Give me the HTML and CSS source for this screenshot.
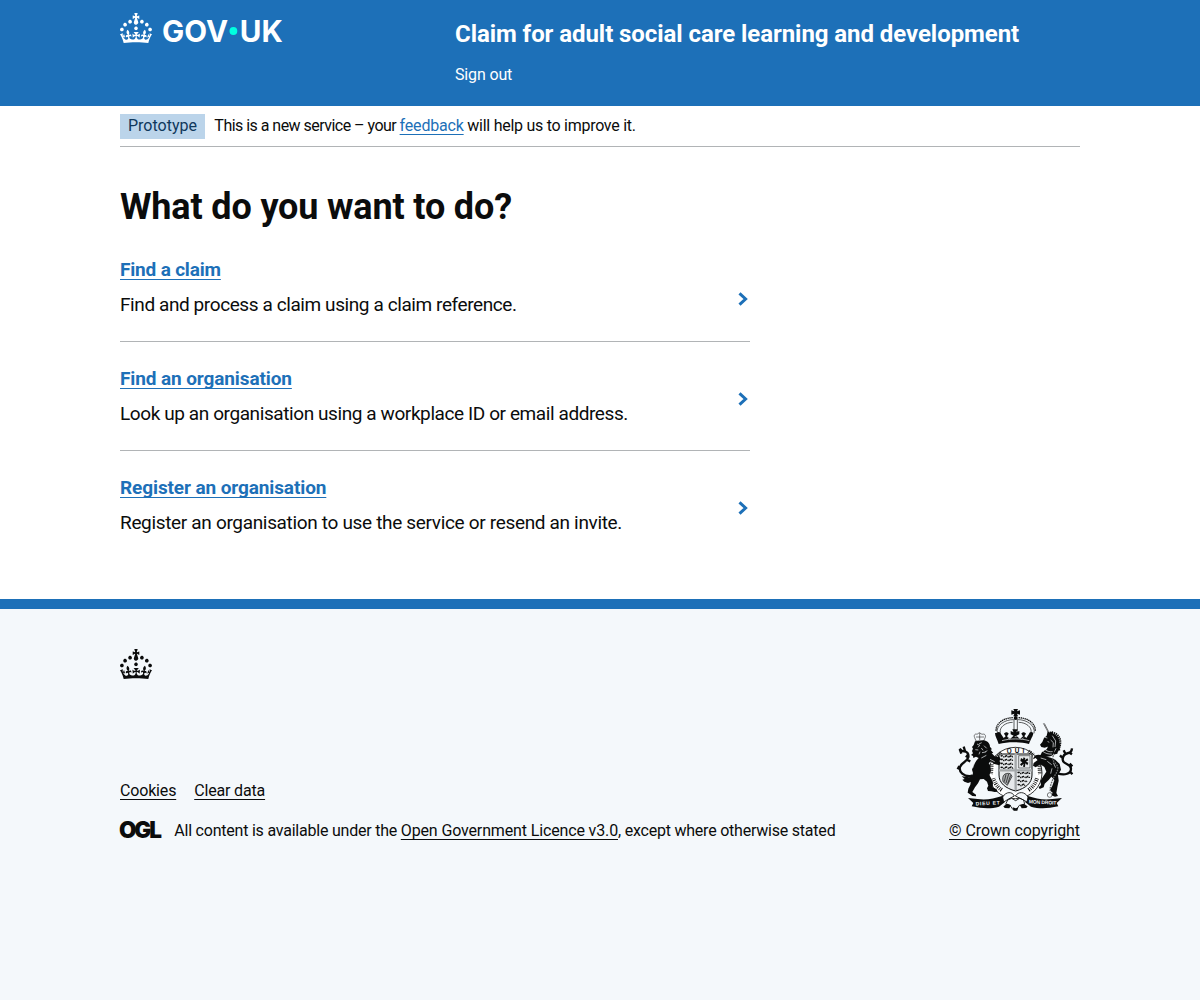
FILE: index.html
```html
<!DOCTYPE html>
<html lang="en">
<head>
<meta charset="utf-8">
<title>What do you want to do?</title>
<link rel="stylesheet" href="styles.css">
</head>
<body>
<header class="header">
  <div class="container header-row">
    <a class="logo" href="#">
      <svg viewBox="0 0 170 38" width="170" height="38"><path id="crown" fill="currentColor" d="M22.6 10.4c-1 .4-2-.1-2.4-1-.4-.9.1-2 1-2.4.9-.4 2 .1 2.4 1s-.1 2-1 2.4m-5.9 6.7c-.9.4-2-.1-2.4-1-.4-.9.1-2 1-2.4.9-.4 2 .1 2.4 1s-.1 2-1 2.4m10.8-3.7c-1 .4-2-.1-2.4-1-.4-.9.1-2 1-2.4.9-.4 2 .1 2.4 1s0 2-1 2.4m3.3 4.8c-1 .4-2-.1-2.4-1-.4-.9.1-2 1-2.4.9-.4 2 .1 2.4 1s-.1 2-1 2.4M17 4.7l2.3 1.2V2.5l-2.3.7-.2-.2.9-3h-3.4l.9 3-.2.2c-.1.1-2.3-.7-2.3-.7v3.4L15 4.7c.1.1.1.2.2.2l-1.3 4c-.1.2-.1.4-.1.6 0 1.1.8 2 1.9 2.2h.7c1-.2 1.9-1.1 1.9-2.1 0-.2 0-.4-.1-.6l-1.3-4c-.1-.2 0-.2.1-.3m-7.6 5.7c.9.4 2-.1 2.4-1 .4-.9-.1-2-1-2.4-.9-.4-2 .1-2.4 1s0 2 1 2.4m-5 3c.9.4 2-.1 2.4-1 .4-.9-.1-2-1-2.4-.9-.4-2 .1-2.4 1s.1 2 1 2.4m-3.2 4.8c.9.4 2-.1 2.4-1 .4-.9-.1-2-1-2.4-.9-.4-2 .1-2.4 1s0 2 1 2.4m14.8 11c4.4 0 8.6.3 12.3.8 1.1-4.5 2.4-7 3.7-8.8l-2.5-.9c.2 1.3.3 1.9 0 2.7-.4-.4-.8-1.1-1.1-2.3l-1.2 4c.7-.5 1.3-.8 2-.9-1.1 2.5-2.6 3.1-3.5 3-1.1-.2-1.7-1.2-1.5-2.1.3-1.2 1.5-1.5 2.1-.1 1.1-2.3-.8-3-2-2.3 1.9-1.9 2.1-3.5.6-5.6-2.1 1.6-2.1 3.2-1.2 5.5-1.2-1.4-3.2-.6-2.5 1.6.9-1.4 2.1-.5 1.9.8-.2 1.1-1.7 2.1-3.5 1.9-2.7-.2-2.9-2.1-2.9-3.6.7-.1 1.9.5 2.9 1.9l.4-4.3c-1.1 1.1-2.1 1.4-3.2 1.4.4-1.2 2.1-3 2.1-3h-5.4s1.7 1.9 2.1 3c-1.1 0-2.1-.2-3.2-1.4l.4 4.3c1-1.4 2.2-2 2.9-1.9-.1 1.5-.2 3.4-2.9 3.6-1.9.2-3.4-.8-3.5-1.9-.2-1.3 1-2.2 1.9-.8.7-2.3-1.2-3-2.5-1.6.9-2.2.9-3.9-1.2-5.5-1.5 2-1.3 3.7.6 5.6-1.2-.7-3.1 0-2 2.3.6-1.4 1.8-1.1 2.1.1.2.9-.3 1.9-1.5 2.1-.9.2-2.4-.5-3.5-3 .6 0 1.2.3 2 .9l-1.2-4c-.3 1.1-.7 1.9-1.1 2.3-.3-.8-.2-1.4 0-2.7l-2.9.9C1.3 23 2.6 25.5 3.7 30c3.7-.5 7.9-.8 12.3-.8"/>
        <text class="wordmark" x="42" y="28.8" textLength="66" lengthAdjust="spacingAndGlyphs">GOV</text>
        <circle cx="113.4" cy="18" r="3.9" fill="#00ffe0"/>
        <text class="wordmark" x="119.8" y="28.8" textLength="43" lengthAdjust="spacingAndGlyphs">UK</text>
      </svg>
    </a>
    <div class="header-content">
      <a class="service" href="#">Claim for adult social care learning and development</a>
      <nav class="nav"><a href="#">Sign out</a></nav>
    </div>
  </div>
</header>
<div class="page">
  <div class="container">
    <div class="phase">
      <strong class="tag">Prototype</strong>
      <span class="phase-text">This is a new service – your <a class="link" href="#">feedback</a><span class="phase-end"> will help us to improve it.</span></span>
    </div>
    <main class="main">
      <h1>What do you want to do?</h1>
      <ul class="cards">
        <li class="card">
          <div><h2><a class="link" href="#">Find a claim</a></h2><p>Find and process a claim using a claim reference.</p></div>
          <svg class="chevron" viewBox="0 0 10 14" width="10" height="14"><path d="M1.5 1.3 7.6 7l-6.1 5.7"/></svg>
        </li>
        <li class="card">
          <div><h2><a class="link" href="#">Find an organisation</a></h2><p>Look up an organisation using a workplace ID or email address.</p></div>
          <svg class="chevron" viewBox="0 0 10 14" width="10" height="14"><path d="M1.5 1.3 7.6 7l-6.1 5.7"/></svg>
        </li>
        <li class="card">
          <div><h2><a class="link" href="#">Register an organisation</a></h2><p class="looser">Register an organisation to use the service or resend an invite.</p></div>
          <svg class="chevron" viewBox="0 0 10 14" width="10" height="14"><path d="M1.5 1.3 7.6 7l-6.1 5.7"/></svg>
        </li>
      </ul>
    </main>
  </div>
</div>
<footer class="footer">
  <div class="container">
    <svg class="footer-crown" viewBox="0 0 32 30" width="32" height="30"><use href="#crown"/></svg>
    <div class="meta">
      <div class="meta-main">
        <div class="links"><a href="#">Cookies</a><a href="#">Clear data</a></div>
        <div class="licence">
          <svg class="ogl" viewBox="0 0 41 18" width="41" height="18"><text x="-1" y="16.6">OGL</text></svg>
          <span>All content is available under the <a href="#">Open Government Licence v3.0</a>, except where otherwise stated</span>
        </div>
      </div>
      <div class="copyright">
        <svg class="arms" viewBox="45 24 360 312" width="120" height="104">
          <!-- royal crown -->
          <path d="M220 27h14l-3 7 9-3v13l-9-3 3 8h-14l3-8-9 3V31l9 3z"/>
          <circle cx="227" cy="54" r="6"/>
          <path class="line" d="M222 58v38M232 58v38M172 100c-6-24 24-42 49-41M282 100c6-24-24-42-49-41M181 98c-4-16 15-31 37-31M273 98c4-16-15-31-37-31"/>
          <path class="beads" d="M168 92c0-24 25-39 52-39M286 92c0-24-25-39-52-39"/>
          <path d="M170 99c5-5 12-4 13 3l8 12 6-5-5-8c4-6 11-6 14 0l-5 8 9 8 11-10-9-4v-10l9 4-4-9h16l-4 9 9-4v10l-9 4 11 10 9-8-5-8c3-6 10-6 14 0l-5 8 6 5 8-12c1-7 8-8 13-3-1 10-8 18-13 33-28-7-63-7-91 0-4-14-11-23-11-33z"/>
          <path class="cut" d="M186 122c25-7 57-7 82 0M204 113l4 5M246 118l5-5M224 110h6"/>
          <!-- garter and shield -->
          <ellipse class="ring" cx="226" cy="219" rx="70" ry="69"/>
          <ellipse class="outline" cx="226" cy="219" rx="80" ry="77"/>
          <path class="runes" d="M160 235c6 18 14 28 28 37M291 235c-5 17-14 28-28 37M155 192l-2 30M298 192l2 30M170 172l14-13M266 154l14 12"/>
          <text class="motto" x="200" y="159" textLength="53">QUI</text>
          <path class="shield" d="M177 162h99v63c0 24-19 40-49 48-31-8-50-24-50-48z"/>
          <path class="lions" d="M182 169c7-7 7 6 14 0s7 6 14 0 5 4 10 0M182 180c7-7 7 6 14 0s7 6 14 0 5 4 10 0M182 192c7-7 7 6 14 0s7 6 14 0 5 4 10 0M182 203c7-5 7 6 14 0s7 6 14 0 5 4 10 0M233 219c7-7 7 6 14 0s7 6 14 0 5 4 9 0M233 231c7-7 7 6 14 0s7 6 14 0 4 4 9 0M233 243c7-7 7 6 14 0s7 6 14 0M233 255c7-5 7 6 14 0s5 4 8 0"/>
          <path class="tress" d="M236 167h34v37h-34z"/>
          <path d="m243 174 6 4 2-6 5 3-2 6 8-6 3 6-7 4 7 3-3 8-6-6-1 11-6-1 2-9-7 7-4-5 7-6-6-4z"/>
          <path class="harp" d="M189 245c-4-20 6-28 22-24l5 8-14 27zM193 245l5-22M198 249l8-27M203 251l9-25"/>
          <path class="cross" d="M227 160v110M177 211h99"/>
          <!-- lion -->
          <path class="thin" d="M104 113c-4-8 2-13 7-10l7-5 8 5c8-3 13 3 9 11l-4 9h-23zM108 111h24M119 99v21"/>
          <path d="M105 124l26-3c10 1 19 9 19 19l6 8-4 1 8 10-5 1 9 9 14 2 5 7-6 5 5 5-4 8-18-5-6-7-8 5 5 9 2 15-5 12 5 9 6 14-1 14 12 6 3 7-9 1-10-2-10-1-3-8 4-8-4-12-10-8-11 1-6 12-9 12-8 14 11 8v5l-11-1-8-6-6-4 2-12 6-12 3-19 5-16-3-10 5-14 9-14 6-7-8-4-8 4-1-6-6-3 6-5-3-7 3-7-3-5 5-6z"/>
          <path class="cut" d="M111 132l8 4-5 6M106 149l9 1M124 144l5 7M132 137l8 8M126 158l11-2M139 166l-15 8M150 178l14 7M103 190l-5 14M117 132l8-4M120 155l-3 8M142 152l-7 4"/>
          <path d="M84 249l-11-4-6-6 7-2-9-8 12 1 11 2 7-9 10 8-10 14z"/>
          <path class="tail" d="M93 228c-22 2-37-12-33-27 3-14 22-15 25-29 2-11-4-18-13-18-6 0-10-4-13-8M59 147l5 14M75 153l-4-13M86 161l-8 11M58 198l-5 10M82 180l9 4"/>
          <!-- unicorn -->
          <path class="thin" d="M310 70l14 26M313 70l13 25"/>
          <path d="M323 94l8 5 7-6 1 8c11 3 20 12 19 27l5 10-5 3 3 10-7 1-2 9-8 2-9-9-4-11-8-3-9 3-10-2-4-7 7-8 5-12 8-7z"/>
          <path d="M326 136l18 8 2 12-12 12-22 4-12-4 6-12 14-8z"/>
          <path class="cut" d="M315 112l7 2M337 107l10 16-2 18M332 120l8 8-1 14M348 145l-5 12M323 123l4 5M306 152c8 8 20 12 34 10M312 146c8 8 16 10 26 9"/>
          <path class="crest" d="M329 99c17-2 31 9 31 27s-9 32-24 36"/>
          <path d="M306 166c-13-4-20-1-24 4l-3 8 8-4 6 6-12 9-2 8 8 5 14-9 12 8 6 14-9 14-9 14 2 12-7 7 3 5 12-5 3-11 12-11 8-10 9 10-6 17-8 14 9 7-4 8 11 4 9-2-5-9 3-17 4-20-2-17 9-16-4-17-13-13-14-6z"/>
          <path class="cut" d="M302 174l17 5M322 184l13 10M340 188l7 15M336 205l-4 16"/>
          <path class="chain" d="M341 166c-9 14 4 20 10 30 8 14-5 25-11 39-6 15-12 26-8 42"/>
          <circle class="thin" cx="329" cy="285" r="7"/>
          <path class="tail" d="M352 220c23 7 41 1 41-14 0-16-25-12-25-27 0-10 6-18 17-20 7-1 10-5 11-14M369 175l-9-9M388 158l8 5M389 191l8 8M389 213l8 10M371 151l4 8"/>
          <!-- scroll -->
          <path d="M84 294l29 3c29 4 47-2 76-10l5 20-17 13c-25 7-49 6-82-1l5-10z"/>
          <path d="M366 294l-29 3c-29 4-47-2-76-10l-5 20 17 13c25 7 49 6 82-1l-5-10z"/>
          <path class="ribbon" d="M188 291c10-17 29-17 35-3-12 6-22 11-32 18zM264 291c-10-17-29-17-38-3 13 6 24 11 35 18zM203 300l12-5 12 7 12-7 12 5 3 13-16 3-9 13h-10l-9-13-13-3z"/>
          <path d="M190 319l12-8 11 5-5 9-14-1zM263 319l-12-8-11 5 5 9 14-1zM218 322l9 3 8-3-3 10h-11z"/>
          <text class="scroll" x="107" y="315" textLength="72" transform="rotate(-3 140 310)">DIEU ET</text>
          <text class="scroll" x="266" y="312" textLength="83" transform="rotate(3 310 310)">MON DROIT</text>
        </svg>
        <a href="#">© Crown copyright</a>
      </div>
    </div>
  </div>
</footer>
</body>
</html>
```
FILE: styles.css
```css
* { box-sizing: border-box; }
body { margin: 0; min-height: 1000px; font-family: Roboto, Arial, sans-serif; font-size: 16px; line-height: 20px; color: #0b0c0c; background: #f4f8fb; }
.container { width: 960px; margin: 0 auto; }
svg { display: block; }
a { color: inherit; text-decoration-thickness: 1px; text-underline-offset: 3px; text-decoration-skip-ink: none; }

.header { height: 106px; background: #1d70b8; color: #fff; }
.header a { text-decoration: none; }
.header-row { display: flex; }
.logo { width: 335px; padding-top: 13px; }
.wordmark { font: 700 29.5px Inter, sans-serif; fill: #fff; }
.header-content { display: flex; flex-direction: column; padding-top: 19px; }
.service { font-size: 24px; line-height: 30px; font-weight: 700; letter-spacing: -0.065px; }
.nav { margin-top: 16px; letter-spacing: -0.15px; }

.page { background: #fff; }
.phase { display: flex; align-items: flex-start; gap: 9.4px; padding: 8px 0 7px; border-bottom: 1px solid #b1b4b6; }
.tag { padding: 0 8px 1px; line-height: 24px; font-weight: 400; color: #0f385c; background: #bbd4ea; }
.phase-text { line-height: 24px; letter-spacing: -0.53px; white-space: nowrap; }
.phase-text a { letter-spacing: -0.19px; }
.phase-end { letter-spacing: -0.27px; }
.link { color: #1d70b8; }

.main { padding: 40px 0; }
h1 { margin: 0 0 30px; font-size: 36px; line-height: 40px; letter-spacing: -0.15px; }
.cards { width: 630px; margin: 0; padding: 0; list-style: none; }
.card { display: flex; justify-content: space-between; padding: 24px 2.5px 24px 0; border-bottom: 1px solid #b1b4b6; }
.card:first-child { padding-top: 0; }
.card:last-child { border-bottom: 0; }
h2 { margin: 0 0 10px; font-size: 19px; line-height: 25px; letter-spacing: -0.11px; }
.card:first-child h2 { letter-spacing: -0.18px; }
.card p { margin: 0; font-size: 19px; line-height: 25px; letter-spacing: -0.41px; }
.card p.looser { letter-spacing: -0.33px; }
.chevron { margin-top: 26px; fill: none; stroke: #1d70b8; stroke-width: 3; }
.card:first-child .chevron { margin-top: 35px; }

.footer { padding: 40px 0; border-top: 10px solid #1d70b8; }
.meta { display: flex; justify-content: space-between; align-items: flex-end; margin-top: 29px; }
.links { display: flex; gap: 18px; margin-bottom: 20px; letter-spacing: -0.17px; }
.licence { display: flex; gap: 13.3px; letter-spacing: -0.22px; }
.licence a { letter-spacing: -0.14px; }
.ogl { font: 900 22.5px Inter, sans-serif; letter-spacing: -2.1px; fill: #0b0c0c; overflow: visible; }
.copyright { display: flex; flex-direction: column; align-items: flex-end; letter-spacing: -0.09px; }
.arms { margin: 0 5px 9px 0; fill: #0b0c0c; }
.arms .line { fill: none; stroke: #0b0c0c; stroke-width: 2; }
.arms .thin { fill: #f4f8fb; stroke: #0b0c0c; stroke-width: 1.6; }
.arms .beads { fill: none; stroke: #0b0c0c; stroke-width: 4; stroke-dasharray: 4 2; }
.arms .cut { fill: none; stroke: #f4f8fb; stroke-width: 2; }
.arms .ring { fill: none; stroke: #fff; stroke-width: 18; }
.arms .outline { fill: none; stroke: #0b0c0c; stroke-width: 2.5; }
.arms .runes { fill: none; stroke: #0b0c0c; stroke-width: 12; stroke-dasharray: 2 3 3 4; }
.arms .motto { font: 700 19px "Liberation Sans", sans-serif; }
.arms .shield { fill: #e6e9eb; stroke: #0b0c0c; stroke-width: 3; }
.arms .lions { fill: none; stroke: #0b0c0c; stroke-width: 4.5; stroke-dasharray: 7 2 4 1.5; }
.arms .tress { fill: none; stroke: #0b0c0c; stroke-width: 1.5; }
.arms .harp { fill: #a8abad; stroke: #0b0c0c; stroke-width: 2; }
.arms .cross { fill: none; stroke: #a4a8aa; stroke-width: 7; }
.arms .tail { fill: none; stroke: #0b0c0c; stroke-width: 7; }
.arms .crest { fill: none; stroke: #0b0c0c; stroke-width: 8; stroke-dasharray: 4 2; }
.arms .chain { fill: none; stroke: #6a6c6d; stroke-width: 4; stroke-dasharray: 5 3; }
.arms .ribbon { fill: #f4f8fb; stroke: #0b0c0c; stroke-width: 2.5; }
.arms .scroll { font: 700 15px "Liberation Sans", sans-serif; fill: #f4f8fb; }
```
